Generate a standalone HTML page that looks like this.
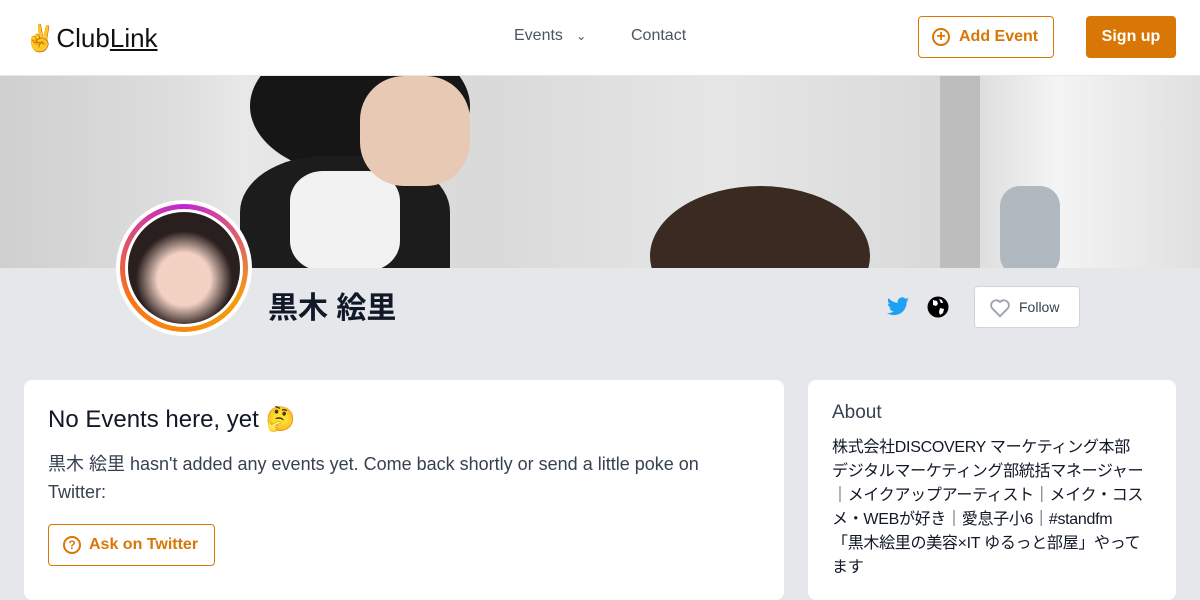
<!DOCTYPE html>
<html><head><meta charset="utf-8"><style>
*{box-sizing:border-box;margin:0;padding:0}
body{width:1200px;height:580px;overflow:hidden;background:#e5e7eb;font-family:"Liberation Sans","Noto Sans CJK JP",sans-serif;position:relative}
.hdr{position:absolute;left:0;top:0;width:1200px;height:76px;background:#fff;border-bottom:1px solid #e5e7eb}
.logo{position:absolute;left:24px;top:23px;font-size:26px;color:#111}
.nav{position:absolute;top:27px;font-size:16px;color:#4b5563}
.btn1{position:absolute;left:918px;top:16px;width:136px;height:42px;border:1px solid #d97706;border-radius:4px;color:#d97706;font-size:16px;font-weight:bold;line-height:40px;padding-left:40px}
.btn2{position:absolute;left:1086px;top:16px;width:90px;height:42px;background:#d97706;border-radius:4px;color:#fff;font-size:16px;font-weight:bold;line-height:42px;text-align:center}
.banner{position:absolute;left:0;top:76px;width:1200px;height:192px;background:linear-gradient(90deg,#cfcfcf 0%,#dedede 15%,#e8e8e8 20%,#d9d9d9 40%,#e6e6e6 60%,#d8d8d8 80%,#f4f4f4 88%,#e0e0e0 100%);overflow:hidden}
.card{position:absolute;background:#fff;border-radius:8px}
</style></head><body>
<div class="hdr">
<div class="logo">✌️Club<span style="text-decoration:underline">Link</span></div>
<div class="nav" style="left:514px">Events &nbsp; <span style="font-size:12px">⌄</span></div>
<div class="nav" style="left:631px">Contact</div>
<div class="btn1"><span style="position:absolute;left:13px;top:11px;width:18px;height:18px;border:2px solid #d97706;border-radius:50%;line-height:13px;text-align:center;font-size:16px">+</span>Add Event</div>
<div class="btn2">Sign up</div>
</div>
<div class="banner">
<div style="position:absolute;left:250px;top:-40px;width:220px;height:140px;background:#161616;border-radius:50%"></div>
<div style="position:absolute;left:240px;top:80px;width:210px;height:140px;background:#1c1c1c;border-radius:40% 40% 0 0"></div>
<div style="position:absolute;left:290px;top:95px;width:110px;height:100px;background:#f2f2f2;border-radius:30%"></div>
<div style="position:absolute;left:360px;top:0;width:110px;height:110px;background:#e8c9b4;border-radius:40%"></div>
<div style="position:absolute;left:650px;top:110px;width:220px;height:140px;background:#3a2a22;border-radius:50%"></div>
<div style="position:absolute;left:940px;top:0;width:40px;height:192px;background:#bdbdbd"></div>
<div style="position:absolute;left:1000px;top:110px;width:60px;height:90px;background:#b0b8c0;border-radius:20px"></div>
</div>
<div style="position:absolute;left:116px;top:200px;width:136px;height:136px;border-radius:50%;background:#fff;padding:4px">
<div style="width:128px;height:128px;border-radius:50%;background:conic-gradient(#c026d3,#f59e0b,#f97316,#c026d3);padding:5px"><div style="width:118px;height:118px;border-radius:50%;background:#fff;padding:3px"><div style="width:112px;height:112px;border-radius:50%;background:radial-gradient(circle at 50% 60%,#f3d2c4 30%,#2a1f1f 55%)"></div></div></div></div>
<div style="position:absolute;left:268px;top:283px;font-size:30px;font-weight:bold;color:#111827">黒木 絵里</div>
<svg style="position:absolute;left:887px;top:297px" width="22" height="19" viewBox="0 0 24 20"><path fill="#1da1f2" d="M24 2.4a10 10 0 0 1-2.8.8A4.9 4.9 0 0 0 23.3.4a9.9 9.9 0 0 1-3.1 1.2A4.9 4.9 0 0 0 11.8 6 14 14 0 0 1 1.7.9a4.9 4.9 0 0 0 1.5 6.6 4.9 4.9 0 0 1-2.2-.6 4.9 4.9 0 0 0 3.9 4.8 4.9 4.9 0 0 1-2.2.1 4.9 4.9 0 0 0 4.6 3.4A9.9 9.9 0 0 1 0 17.2 14 14 0 0 0 7.5 19.4c9.1 0 14-7.5 14-14v-.6A10 10 0 0 0 24 2.4z"/></svg>
<svg style="position:absolute;left:927px;top:296px" width="22" height="22" viewBox="0 0 22 22"><circle cx="11" cy="11" r="10.5" fill="#000"/><path fill="#fff" d="M6 4l4 1 1 3-2 2-3-1zM12 3l3 1 1 3-2 0zM13 12l4 1-1 4-3 2-1-3z"/></svg>
<div style="position:absolute;left:974px;top:286px;width:106px;height:42px;background:#fff;border:1px solid #d1d5db;border-radius:4px;font-size:14px;color:#374151;line-height:40px;padding-left:44px">Follow
<svg style="position:absolute;left:14px;top:11px" width="22" height="20" viewBox="0 0 24 22"><path fill="none" stroke="#9ca3af" stroke-width="2" d="M12 20l-8.5-8.5a5 5 0 0 1 8.5-7 5 5 0 0 1 8.5 7z"/></svg></div>
<div class="card" style="left:24px;top:380px;width:760px;height:220px;padding:24px">
<div style="font-size:24px;color:#111827;margin-top:1px">No Events here, yet 🤔</div>
<div style="font-size:18px;color:#374151;line-height:28px;margin-top:16px;width:680px">黒木 絵里 hasn't added any events yet. Come back shortly or send a little poke on Twitter:</div>
<div style="position:absolute;left:24px;top:144px;width:167px;height:42px;border:1px solid #d97706;border-radius:4px;color:#d97706;font-weight:bold;font-size:16px;line-height:40px;padding-left:40px"><span style="position:absolute;left:14px;top:11px;width:18px;height:18px;border:2px solid #d97706;border-radius:50%;font-size:12px;line-height:14px;text-align:center">?</span>Ask on Twitter</div>
</div>
<div class="card" style="left:808px;top:380px;width:368px;height:220px;padding:22px 24px">
<div style="font-size:19px;color:#374151">About</div>
<div style="font-size:16px;color:#111827;line-height:24px;margin-top:12px;white-space:nowrap;letter-spacing:-0.3px">株式会社DISCOVERY マーケティング本部<br>デジタルマーケティング部統括マネージャー<br>｜メイクアップアーティスト｜メイク・コス<br>メ・WEBが好き｜愛息子小6｜#standfm<br>「黒木絵里の美容×IT ゆるっと部屋」やって<br>ます</div>
</div>
</body></html>
